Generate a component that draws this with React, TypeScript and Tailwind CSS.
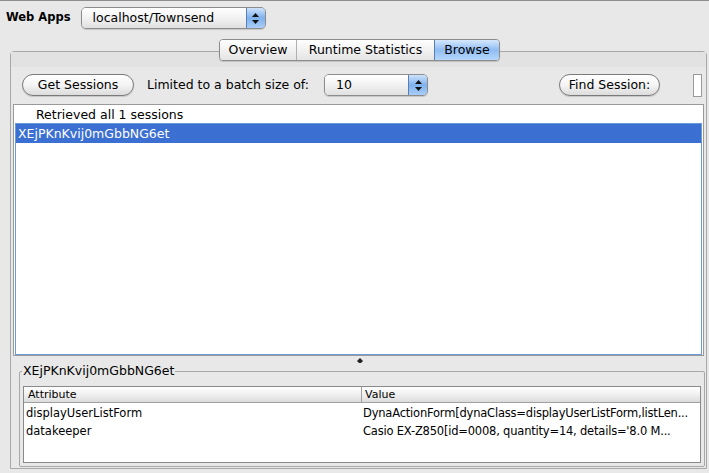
import React from 'react'

const font = { fontFamily: '"DejaVu Sans", "Liberation Sans", sans-serif' }

function AquaSelect({ label, width }: { label: string; width: string }) {
  return (
    <div className={`${width} h-[22px] flex rounded-[5px] border border-[#8c8c8c] overflow-hidden shadow-[0_1px_1px_rgba(0,0,0,0.15)]`}>
      <div className="flex-1 bg-gradient-to-b from-white via-[#f2f2f2] to-[#e0e0e0] pl-[11px] text-[12.5px] leading-[20px] text-black">
        {label}
      </div>
      <div className="w-[19px] border-l border-[#5a7fb4] bg-gradient-to-b from-[#cfe3fb] via-[#7fb1ee] to-[#a9cdf7] flex flex-col items-center justify-center gap-[3px]">
        <svg width="7" height="4" viewBox="0 0 7 4"><path d="M3.5 0L7 4H0z" fill="#111" /></svg>
        <svg width="7" height="4" viewBox="0 0 7 4"><path d="M0 0h7L3.5 4z" fill="#111" /></svg>
      </div>
    </div>
  )
}

function AquaButton({ label, width }: { label: string; width: string }) {
  return (
    <div className={`${width} h-[22px] rounded-full border border-[#7a7a7a] bg-gradient-to-b from-white via-[#f4f4f4] to-[#dcdcdc] text-[12.5px] leading-[20px] text-center text-black shadow-[0_1px_1px_rgba(0,0,0,0.15)]`}>
      {label}
    </div>
  )
}

export default function App() {
  const rows = [
    ['displayUserListForm', 'DynaActionForm[dynaClass=displayUserListForm,listLen...'],
    ['datakeeper', "Casio EX-Z850[id=0008, quantity=14, details='8.0 M..."],
  ]

  return (
    <div style={font} className="w-[709px] h-[473px] overflow-hidden bg-[#e8e8e8] border-t border-[#8e8e8e] text-black">
      {/* web app chooser */}
      <div className="flex items-center h-[22px] mt-[6px]">
        <span className="ml-[6px] text-[11.5px] font-bold">Web Apps</span>
        <div className="ml-[10px]">
          <AquaSelect label="localhost/Townsend" width="w-[185px]" />
        </div>
      </div>

      {/* tabbed panel */}
      <div className="relative pt-[11px] ml-[10px] mr-[2px]">
        <div className="absolute left-[209px] top-[10px] flex h-[22px] rounded-[4px] border border-[#8c8c8c] overflow-hidden text-[12.5px] leading-[20px] z-10 shadow-[0_1px_1px_rgba(0,0,0,0.15)]">
          <div className="w-[77px] text-center bg-gradient-to-b from-white to-[#e4e4e4] border-r border-[#b0b0b0]">Overview</div>
          <div className="w-[137px] text-center bg-gradient-to-b from-white to-[#e4e4e4]">Runtime Statistics</div>
          <div className="w-[65px] text-center bg-gradient-to-b from-[#d6e8fc] via-[#8fbcf2] to-[#b8d8fb] border-l border-[#5a7fb4]">Browse</div>
        </div>
        <div className="mt-[11px] h-[418px] rounded-t-[4px] border border-[#a8a8a8] bg-[#e8e8e8] flex flex-col">
          <div className="h-[15px] bg-[#e2e2e2]" />
          {/* toolbar */}
          <div className="flex items-center h-[22px] mt-[7px]">
            <div className="ml-[11px]"><AquaButton label="Get Sessions" width="w-[112px]" /></div>
            <span className="ml-[13px] text-[12.5px]">Limited to a batch size of:</span>
            <div className="ml-[15px]"><AquaSelect label="10" width="w-[104px]" /></div>
            <div className="ml-auto"><AquaButton label="Find Session:" width="w-[101px]" /></div>
            <div className="ml-[33px] mr-[4px] w-[9px] h-[23px] border border-[#9a9a9a] bg-white" />
          </div>

          {/* sessions list */}
          <div className="mt-[8px] mx-[2px] h-[252px] border border-[#9a9a9a] bg-white flex flex-col">
            <div className="h-[18px] pl-[22px] text-[12.5px] leading-[20px]">Retrieved all 1 sessions</div>
            <div className="flex-1 mx-[1px] border border-[#6b9ad8]">
              <div className="h-[19px] bg-[#3c6fd2] text-white text-[12.5px] leading-[19px] pl-[2px]">XEjPKnKvij0mGbbNG6et</div>
            </div>
          </div>

          {/* splitter */}
          <div className="h-[15px] flex justify-center pt-[2px]">
            <svg width="6" height="5" viewBox="0 0 6 5" className="ml-[2px]"><path d="M0 3L3 0L6 3L4 5H2z" fill="#222" /></svg>
          </div>

          {/* attributes group */}
          <div className="relative ml-[8px] mr-[1px] h-[96px] border border-[#a8a8a8] rounded-[2px]">
            <span className="absolute left-[2px] top-[-8px] px-[1px] bg-[#e8e8e8] text-[12.5px] leading-[14px]">XEjPKnKvij0mGbbNG6et</span>
            <div className="mt-[14px] mx-[3px] h-[77px] border border-[#8a8a8a] bg-white overflow-hidden">
              <div className="flex h-[16px] border-b border-[#a0a0a0] bg-gradient-to-b from-white via-[#f0f0f0] to-[#dcdcdc] text-[11px] leading-[16px]">
                <div className="w-[338px] shrink-0 pl-[4px] border-r border-[#a0a0a0]">Attribute</div>
                <div className="flex-1 pl-[3px]">Value</div>
              </div>
              <div className="pt-[1px]">
                {rows.map(([k, v]) => (
                  <div key={k} className="flex h-[18px] text-[11.5px] leading-[18px]">
                    <div className="w-[338px] shrink-0 pl-[2px]">{k}</div>
                    <div className="flex-1 min-w-0 pl-[1px] whitespace-nowrap overflow-hidden tracking-[-0.2px]">{v}</div>
                  </div>
                ))}
              </div>
            </div>
          </div>
        </div>
      </div>
    </div>
  )
}
